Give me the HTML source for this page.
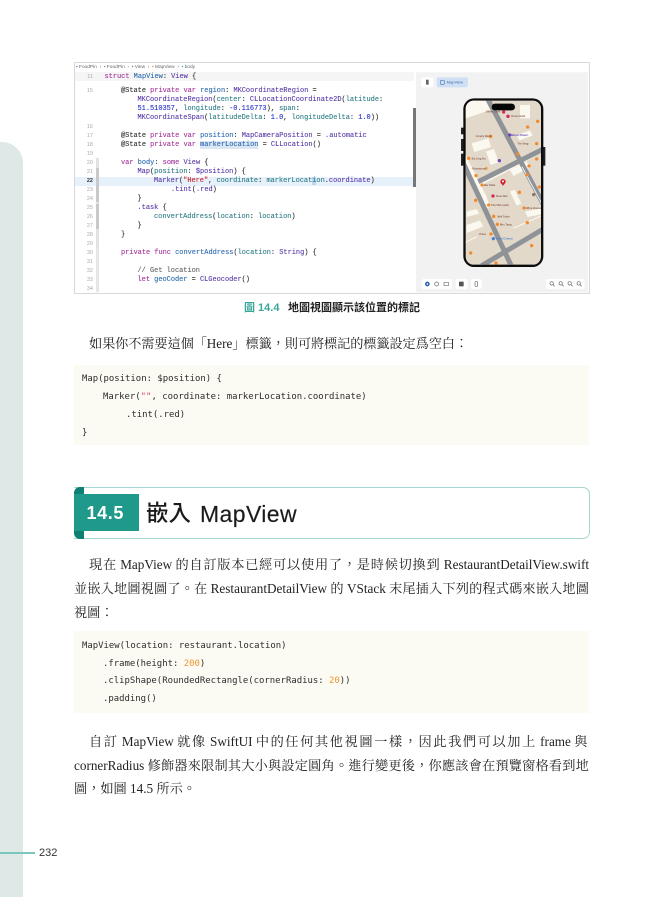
<!DOCTYPE html>
<html lang="zh-Hant"><head><meta charset="utf-8"><title>14.5 嵌入 MapView</title>
<style>
html,body{margin:0;padding:0;background:#fff}
#p{position:relative;width:663px;height:897px;overflow:hidden;background:#fff}
#p div{position:absolute}
.t{font-family:"Liberation Serif","Noto Serif CJK TC","Noto Serif CJK SC",serif;font-size:13.2px;line-height:20px;height:20px;color:#222;white-space:nowrap}
.q{font-family:"Noto Sans CJK TC",sans-serif;line-height:0;font-weight:300}
.c{font-family:"DejaVu Sans Mono","Liberation Mono",monospace;font-size:8.95px;line-height:14px;height:14px;white-space:pre;color:#2c2c2c}
.x{font-family:"Liberation Mono",monospace;font-size:6.95px;line-height:9px;height:9px;white-space:pre;color:#333;-webkit-text-stroke:.12px currentColor;filter:blur(.2px)}
.n{font-family:"Liberation Sans",sans-serif;font-size:5.5px;line-height:9px;height:9px;width:12px;left:81px;text-align:right;color:#aaa}
.k{color:#a5369b}.y{color:#5b3ca8}.b{color:#2f6db0}.g{color:#2f7f88}.u{color:#2530c8}.r{color:#c8242a}
</style></head><body><div id="p">

<div style="left:0;top:142px;width:23px;height:755px;background:#dee9e7;border-top-right-radius:21px"></div>
<div style="left:0;top:852px;width:35px;height:2px;background:#7cc7bd"></div>
<div style="left:39px;top:846px;font:11px/14px 'Liberation Sans',sans-serif;color:#333">232</div>

<!-- Xcode -->
<div style="left:73.5px;top:62px;width:516px;height:232px;background:#fff;box-sizing:border-box;border:1px solid #d8d8d8"></div>
<div style="left:75px;top:72px;width:339px;height:9px;background:#f5f5f5"></div>
<div style="left:75px;top:176.5px;width:338px;height:9.5px;background:#e7f1fb"></div>
<div style="left:96px;top:158px;width:3px;height:92px;background:#e2e2e2"></div>
<div style="left:96px;top:168px;width:3px;height:34px;background:#c9c9c9"></div>
<div style="left:96px;top:204px;width:3px;height:25px;background:#c9c9c9"></div>
<div style="left:96px;top:248px;width:3px;height:44px;background:#e6e6e6"></div>
<div style="left:413px;top:108px;width:2.5px;height:79px;background:#777"></div>
<div style="left:76px;top:63px;font:4.8px/9px 'Liberation Sans',sans-serif;color:#666;white-space:pre"><span style="color:#3a6fb5">▪</span> FoodPin  ›  <span style="color:#3a8fd0">▪</span> FoodPin  ›  <span style="color:#3a8fd0">▪</span> View  ›  <span style="color:#e0872c">▪</span> MapView  ›  <span style="color:#2a9fd8">▪</span> body</div>

<div class="n" style="top:73px">11</div><div class="x" style="left:104.5px;top:73px"><span class="k">struct</span> <span class="b">MapView</span>: <span class="y">View</span> {</div>
<div class="n" style="top:87px">15</div><div class="x" style="left:121px;top:87px">@State <span class="k">private var</span> <span class="b">region</span>: <span class="y">MKCoordinateRegion</span> =</div>
<div class="x" style="left:137.5px;top:96px"><span class="y">MKCoordinateRegion</span>(<span class="g">center</span>: <span class="y">CLLocationCoordinate2D</span>(<span class="g">latitude</span>:</div>
<div class="x" style="left:137.5px;top:105px"><span class="u">51.510357</span>, <span class="g">longitude</span>: <span class="u">-0.116773</span>), <span class="g">span</span>:</div>
<div class="x" style="left:137.5px;top:114px"><span class="y">MKCoordinateSpan</span>(<span class="g">latitudeDelta</span>: <span class="u">1.0</span>, <span class="g">longitudeDelta</span>: <span class="u">1.0</span>))</div>
<div class="n" style="top:123px">16</div>
<div class="n" style="top:132px">17</div><div class="x" style="left:121px;top:132px">@State <span class="k">private var</span> <span class="b">position</span>: <span class="y">MapCameraPosition</span> = <span class="y">.automatic</span></div>
<div class="n" style="top:141px">18</div><div class="x" style="left:121px;top:141px">@State <span class="k">private var</span> <span class="b" style="background:#dbe6f3">markerLocation</span> = <span class="y">CLLocation</span>()</div>
<div class="n" style="top:150px">19</div>
<div class="n" style="top:159px">20</div><div class="x" style="left:121px;top:159px"><span class="k">var</span> <span class="b">body</span>: <span class="k">some</span> <span class="y">View</span> {</div>
<div class="n" style="top:168px">21</div><div class="x" style="left:137.5px;top:168px"><span class="y">Map</span>(<span class="g">position</span>: <span class="y">$position</span>) {</div>
<div class="n" style="top:177px;color:#333;font-weight:bold">22</div><div class="x" style="left:154px;top:177px"><span class="y">Marker</span>(<span class="r">"Here"</span>, <span class="g">coordinate</span>: <span class="g">markerLocat<span style="background:#bcd6ef">i</span>on</span>.<span class="y">coordinate</span>)</div>
<div class="n" style="top:186px">23</div><div class="x" style="left:171px;top:186px"><span class="y">.tint</span>(<span class="y">.red</span>)</div>
<div class="n" style="top:195px">24</div><div class="x" style="left:137.5px;top:195px">}</div>
<div class="n" style="top:204px">25</div><div class="x" style="left:137.5px;top:204px"><span class="y">.task</span> {</div>
<div class="n" style="top:213px">26</div><div class="x" style="left:154px;top:213px"><span class="g">convertAddress</span>(<span class="g">location</span>: <span class="g">location</span>)</div>
<div class="n" style="top:222px">27</div><div class="x" style="left:137.5px;top:222px">}</div>
<div class="n" style="top:231px">28</div><div class="x" style="left:121px;top:231px">}</div>
<div class="n" style="top:240px">29</div>
<div class="n" style="top:249px">30</div><div class="x" style="left:121px;top:249px"><span class="k">private func</span> <span class="b">convertAddress</span>(<span class="g">location</span>: <span class="y">String</span>) {</div>
<div class="n" style="top:258px">31</div>
<div class="n" style="top:267px">32</div><div class="x" style="left:137.5px;top:267px;color:#666">// Get location</div>
<div class="n" style="top:276px">33</div><div class="x" style="left:137.5px;top:276px"><span class="k">let</span> <span class="b">geoCoder</span> = <span class="y">CLGeocoder</span>()</div>
<div class="n" style="top:285px">34</div>

<!-- preview -->
<svg style="position:absolute;left:410px;top:55px" width="185" height="245" viewBox="0 0 555 735">
<defs><clipPath id="s"><rect x="167" y="137" width="226" height="492" rx="24"/></clipPath></defs>
<rect x="18" y="52" width="516" height="660" fill="#f2f2f2"/>
<rect x="34" y="67" width="36" height="30" rx="6" fill="#fff"/><rect x="48" y="74" width="8" height="15" fill="#666"/>
<rect x="80" y="67" width="94" height="30" rx="7" fill="#cfe0f5"/><rect x="91" y="76" width="12" height="12" rx="3" fill="none" stroke="#4a79b8" stroke-width="2"/>
<text x="110" y="86" font-family="Liberation Sans" font-size="12" fill="#3f6ea8">MapView</text>
<rect x="153" y="218" width="8" height="20" fill="#222"/><rect x="153" y="252" width="8" height="36" fill="#222"/><rect x="153" y="296" width="8" height="36" fill="#222"/><rect x="398" y="276" width="8" height="56" fill="#222"/>
<rect x="160" y="130" width="240" height="506" rx="32" fill="#0c0c0c"/>
<g clip-path="url(#s)">
<rect x="160" y="130" width="240" height="506" fill="#e2d9ca"/>
<g fill="#fbf8ef">
<path d="M167 137H228L240 165 167 190Z"/>
<path d="M185 265l50-15 8 26-50 15zM228 290l24-8 14 40-24 8zM330 150h30v40h-30zM300 345l50-25 10 18-50 25zM300 410l14-6 20 42-14 6zM170 470l30-8 8 14-38 10zM170 510l40-14 10 18-50 20zM345 470l48-10v18l-40 8zM320 240l40-14 8 16-40 14z"/>
<path d="M167 300l60 120 14 34-10 6-64-130z"/><path d="M210 385l100-55 85-45v8l-85 47-96 50z" opacity=".9"/>
</g>
<g fill="none" stroke="#8f9397" stroke-width="15">
<path d="M232 130 400 448"/><path d="M160 325 305 635"/><path d="M205 380 400 282"/><path d="M215 632 400 522"/>
</g>
<g fill="none" stroke="#fff" stroke-width="3" opacity=".85"><path d="M200 545 160 565M336 335 400 455M310 520 400 480"/></g>
<g fill="#f28a2c">
<circle cx="242" cy="244" r="5"/><circle cx="383" cy="199" r="5"/><circle cx="353" cy="216" r="5"/><circle cx="380" cy="266" r="5"/><circle cx="323" cy="297" r="5"/><circle cx="176" cy="310" r="5"/><circle cx="357" cy="333" r="5"/><circle cx="380" cy="312" r="5"/><circle cx="352" cy="359" r="5"/><circle cx="198" cy="362" r="5"/><circle cx="216" cy="390" r="5"/><circle cx="328" cy="412" r="5"/><circle cx="197" cy="436" r="5"/><circle cx="236" cy="450" r="5"/><circle cx="342" cy="459" r="5"/><circle cx="251" cy="484" r="5"/><circle cx="262" cy="508" r="5"/><circle cx="352" cy="503" r="5"/><circle cx="243" cy="537" r="5"/><circle cx="365" cy="572" r="5"/><circle cx="182" cy="594" r="5"/><circle cx="258" cy="624" r="5"/><circle cx="388" cy="396" r="5"/><circle cx="229" cy="340" r="5" fill="#f4b35a"/>
</g>
<circle cx="294" cy="184" r="5" fill="#d6265e"/><circle cx="281" cy="171" r="5" fill="#d6265e"/><circle cx="249" cy="423" r="5" fill="#d6265e"/>
<circle cx="299" cy="240" r="5" fill="#6a46b8"/><circle cx="268" cy="317" r="5" fill="#6a46b8"/>
<circle cx="371" cy="419" r="5" fill="#8d7560"/><circle cx="250" cy="551" r="5" fill="#4a7fd0"/>
<g font-family="Liberation Sans" font-size="8" fill="#8a5a4a" font-weight="bold">
<text x="197" y="246">Lloyds Bank</text><text x="304" y="243" fill="#6a46b8">Movie Planet</text><text x="322" y="269">Yin Yang</text><text x="185" y="313">Ba Ling Hu</text><text x="187" y="343">Restaurant</text><text x="222" y="393">Bar Italia</text><text x="258" y="426">Rose Bar</text><text x="243" y="453">The Old Lamb</text><text x="262" y="487">Nell Taste</text><text x="270" y="511">Mrs Tang</text><text x="258" y="553" fill="#4a7fd0">Hotel Central</text><text x="208" y="540">Pizza</text><text x="348" y="462">Wine House</text><text x="228" y="172">Silver Lane</text><text x="304" y="186">Rose Hotel</text>
</g>
<path d="M279 372a8 8 0 0 1 8 8c0 5-5 7-8 13-3-6-8-8-8-13a8 8 0 0 1 8-8z" fill="#d3202c"/><circle cx="279" cy="379" r="3" fill="#fff"/>
</g>
<rect x="245" y="146" width="70" height="20" rx="10" fill="#050505"/>
<rect x="35" y="672" width="90" height="30" rx="6" fill="#fff"/><circle cx="52" cy="687" r="7" fill="#1f5fb0"/><circle cx="52" cy="687" r="2.5" fill="#fff"/><circle cx="80" cy="687" r="6" fill="none" stroke="#666" stroke-width="2"/><rect x="102" y="682" width="13" height="10" fill="none" stroke="#777" stroke-width="2"/>
<rect x="137" y="672" width="36" height="30" rx="6" fill="#fff"/><rect x="147" y="680" width="14" height="14" rx="2" fill="#555"/>
<rect x="183" y="672" width="32" height="30" rx="6" fill="#fff"/><rect x="195" y="680" width="8" height="14" rx="2" fill="none" stroke="#666" stroke-width="2"/>
<rect x="408" y="672" width="116" height="30" rx="6" fill="#fff"/>
<g fill="none" stroke="#666" stroke-width="2"><circle cx="425" cy="685" r="5"/><path d="M429 689l5 5"/><circle cx="452" cy="685" r="5"/><path d="M456 689l5 5"/><circle cx="479" cy="685" r="5"/><path d="M483 689l5 5"/><circle cx="506" cy="685" r="5"/><path d="M510 689l5 5"/></g>
</svg>

<!-- caption -->
<div style="left:244px;top:301px;font:bold 11px/14px 'Liberation Sans','Noto Sans CJK TC',sans-serif;color:#3aa79a;white-space:pre">圖 14.4</div>
<div style="left:288px;top:301px;font:bold 11px/14px 'Liberation Sans','Noto Sans CJK TC',sans-serif;color:#222;white-space:pre">地圖視圖顯示該位置的標記</div>

<div class="t j" style="left:89px;top:334px;width:379px">如果你不需要這個「Here」標籤&#xFF0C;則可將標記的標籤設定爲空白&#xFF1A;</div>

<!-- code 1 -->
<div style="left:74px;top:365px;width:515px;height:80px;background:#fbfaf3"></div>
<div class="c" style="left:82px;top:372px">Map(position: $position) {</div>
<div class="c" style="left:103px;top:390px">Marker(<span style="color:#e0405a">""</span>, coordinate: markerLocation.coordinate)</div>
<div class="c" style="left:126px;top:408px">.tint(.red)</div>
<div class="c" style="left:82px;top:426px">}</div>

<!-- heading -->
<div style="left:74px;top:487px;width:515.5px;height:51.5px;box-sizing:border-box;border:1.3px solid #a6d6cf;border-left:0;border-radius:0 7px 7px 0"></div>
<div style="left:74px;top:487px;width:10px;height:52px;background:#0d7f73;border-radius:6px 0 0 6px"></div>
<div style="left:74px;top:494px;width:65px;height:37px;background:#1f9a8a"></div>
<div style="left:86.5px;top:502px;font:bold 18px/22px 'Liberation Sans',sans-serif;letter-spacing:.6px;color:#fff;white-space:pre">14.5</div>
<div style="left:146px;top:499px;font:500 22.5px/30px 'Liberation Sans','Noto Sans CJK TC',sans-serif;color:#1c1a1a;white-space:pre">嵌入</div>
<div style="left:200px;top:499px;font:23px/30px 'Liberation Sans',sans-serif;letter-spacing:.4px;color:#1c1a1a;white-space:pre;-webkit-text-stroke:.15px #1c1a1a">MapView</div>

<!-- para 2 -->
<div class="t j" style="left:89px;top:555px;width:500px">現在 MapView 的自訂版本已經可以使用了&#xFF0C;是時候切換到 RestaurantDetailView.swift</div>
<div class="t j" style="left:74px;top:579px;width:515px">並嵌入地圖視圖了&#x3002;在 RestaurantDetailView 的 VStack 末尾插入下列的程式碼來嵌入地圖</div>
<div class="t" style="left:74px;top:603px">視圖&#xFF1A;</div>

<!-- code 2 -->
<div style="left:74px;top:631px;width:515px;height:82px;background:#fbfaf3"></div>
<div class="c" style="left:82px;top:639px">MapView(location: restaurant.location)</div>
<div class="c" style="left:103px;top:657px">.frame(height: <span style="color:#f0962d">200</span>)</div>
<div class="c" style="left:103px;top:674px">.clipShape(RoundedRectangle(cornerRadius: <span style="color:#f0962d">20</span>))</div>
<div class="c" style="left:103px;top:692px">.padding()</div>

<!-- para 3 -->
<div class="t j" style="left:89px;top:732px;width:500px">自訂 MapView 就像 SwiftUI 中的任何其他視圖一樣&#xFF0C;因此我們可以加上 frame 與</div>
<div class="t j" style="left:74px;top:756px;width:515px">cornerRadius 修飾器來限制其大小與設定圓角&#x3002;進行變更後&#xFF0C;你應該會在預覽窗格看到地</div>
<div class="t" style="left:74px;top:779px">圖&#xFF0C;如圖 14.5 所示&#x3002;</div>

</div>
<script>
document.querySelectorAll('.t').forEach(function(e){
  var s=e.textContent,cjk=/[\u3000-\u9fff\uff00-\uffef]+|[^\u3000-\u9fff\uff00-\uffef]+/g;
  e.textContent='';
  var parts=s.match(cjk),spans=[],n=0;
  parts.forEach(function(p){
    var c=/^[\u3000-\u9fff\uff00-\uffef]/.test(p);
    var sp=document.createElement('span');
    sp.innerHTML=p.replace(/[\uff0c\uff1a\u3002]/g,function(m){return '<span class="q">'+m+'</span>';});
    e.appendChild(sp);
    if(c){spans.push(sp);n+=p.length;}
  });
  if(!e.classList.contains('j'))return;
  var target=parseFloat(e.style.width),ls=0,r=document.createRange();
  for(var i=0;i<3;i++){
    r.selectNodeContents(e);
    ls+=(target-r.getBoundingClientRect().width)/n;
    spans.forEach(function(sp){sp.style.letterSpacing=ls+'px';});
  }
});
</script>
</body></html>
